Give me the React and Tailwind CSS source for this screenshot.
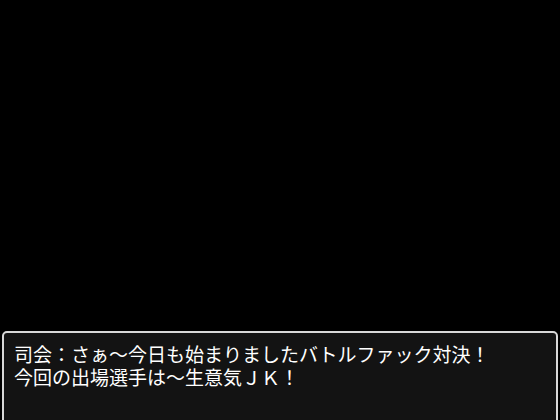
export default function App() {
  return (
    <div className="w-[560px] h-[420px] bg-black overflow-hidden flex flex-col justify-end">
      <div className="mx-[2px] h-[94px] -mb-[5px] rounded-[5px] border-2 border-[#d8d8d8] bg-[#131313] pl-[10px] pr-[12px] pt-[9px] text-[19px] leading-[23px] text-white" style={{ fontFamily: '"Noto Sans CJK JP", sans-serif' }}>
        <div>司会：さぁ～今日も始まりましたバトルファック対決！</div>
        <div>今回の出場選手は～生意気ＪＫ！</div>
      </div>
    </div>
  );
}
